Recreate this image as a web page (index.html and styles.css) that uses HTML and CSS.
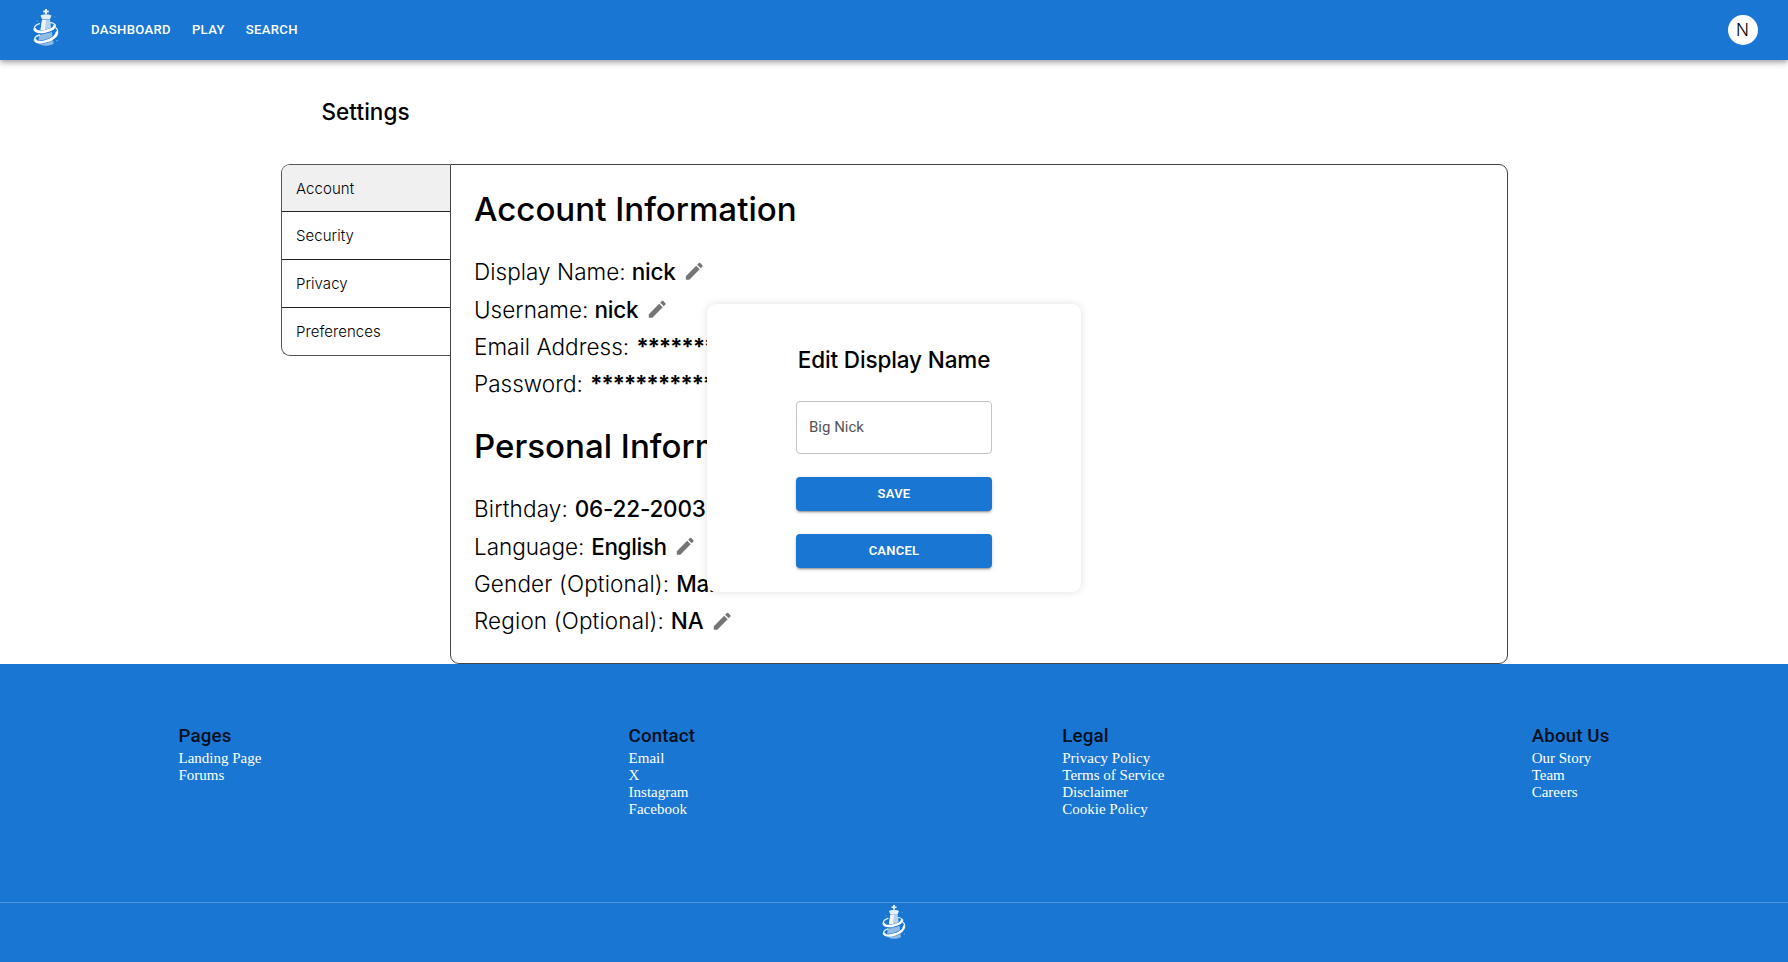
FILE: index.html
```html
<!DOCTYPE html>
<html lang="en">
<head>
<meta charset="utf-8">
<title>Settings</title>
<link rel="stylesheet" href="styles.css">
</head>
<body>
<svg class="defs" width="0" height="0">
  <symbol id="pencil" viewBox="0 0 24 24"><path d="M3 17.25V21h3.75L17.81 9.94l-3.75-3.75L3 17.25zM20.71 7.04c.39-.39.39-1.02 0-1.41l-2.34-2.34a.9959.9959 0 0 0-1.41 0l-1.83 1.83 3.75 3.75 1.83-1.83z"/></symbol>
  <symbol id="logo" viewBox="0 0 26 37">
    <path fill="#e8f1fa" d="M12 0h2v1.600h1.800v1.800H14V5h-2V3.400h-1.800V1.600H12z"/>
    <path fill="#e2eefa" d="M7.500 6.500q5.500-2.600 11 0L16.800 10.500H9.200z"/>
    <path fill="#b5d2ef" d="M9 11h8l2 14H7z"/>
    <path fill="#edf5fc" d="M9 11h4l-1.500 13H7z"/>
    <path fill="#8fbbe6" d="M6 26l13-3 1.500 11v1q-7.500 3.500-15 0v-2z"/>
    <path fill="none" stroke="#1976d2" stroke-width="3.800" d="M1.500 20.500C4 25.500 21 22.500 22.300 16.500M1 31C5 36.500 23 31 24.500 23"/>
    <path fill="none" stroke="#fff" stroke-width="2.700" stroke-linecap="round" d="M1.800 20.300C3.500 25.300 21 22 21.800 16.500M2 31C5 36.300 23 31 24 23.500"/>
    <path fill="none" stroke="#e2eefa" stroke-width="1.300" stroke-linecap="round" d="M1.500 20.500C.8 17.800 3 15.800 6.500 14.600M22 16.500C22 14.800 20.500 14 17.500 13.600M1.700 30.800C1.500 28.500 3.500 26.800 6.500 26M24.300 23.500C25 21.500 24.300 20 22.800 18.800"/>
    <path fill="#8fbbe6" d="M3.800 11.500h1v1h-1zM21.500 7.500h.8v.8h-.8zM23.500 31h1.200v1.200h-1.200z"/>
  </symbol>
</svg>

<header class="topbar">
  <svg class="topbar-logo"><use href="#logo"/></svg>
  <nav class="topnav"><a>DASHBOARD</a><a>PLAY</a><a>SEARCH</a></nav>
  <div class="avatar">N</div>
</header>

<main class="main">
  <h1 class="title">Settings</h1>
  <div class="settings">
    <ul class="tabs">
      <li class="tab active">Account</li>
      <li class="tab">Security</li>
      <li class="tab">Privacy</li>
      <li class="tab">Preferences</li>
    </ul>
    <section class="panel">
      <h2 class="heading">Account Information</h2>
      <div class="rows">
        <p class="row"><span>Display Name:</span><b>nick</b><svg class="edit"><use href="#pencil"/></svg></p>
        <p class="row"><span>Username:</span><b>nick</b><svg class="edit"><use href="#pencil"/></svg></p>
        <p class="row"><span>Email Address:</span><b class="masked">***********</b></p>
        <p class="row"><span>Password:</span><b class="masked">************</b></p>
      </div>
      <h2 class="heading">Personal Information</h2>
      <div class="rows personal">
        <p class="row"><span>Birthday:</span><b>06-22-2003</b></p>
        <p class="row language"><span>Language:</span><b>English</b><svg class="edit"><use href="#pencil"/></svg></p>
        <p class="row"><span>Gender (Optional):</span><b>Male</b></p>
        <p class="row"><span>Region (Optional):</span><b>NA</b><svg class="edit"><use href="#pencil"/></svg></p>
      </div>
    </section>
  </div>
</main>

<div class="modal">
  <h3 class="modal-title">Edit Display Name</h3>
  <div class="field">Big Nick</div>
  <button class="btn">SAVE</button>
  <button class="btn">CANCEL</button>
</div>

<footer class="footer">
  <div class="columns">
    <div class="col"><h4>Pages</h4><a>Landing Page</a><a>Forums</a></div>
    <div class="col"><h4>Contact</h4><a>Email</a><a>X</a><a>Instagram</a><a>Facebook</a></div>
    <div class="col"><h4>Legal</h4><a>Privacy Policy</a><a>Terms of Service</a><a>Disclaimer</a><a>Cookie Policy</a></div>
    <div class="col"><h4>About Us</h4><a>Our Story</a><a>Team</a><a>Careers</a></div>
  </div>
  <div class="bottom"><svg class="bottom-logo"><use href="#logo"/></svg></div>
</footer>
</body>
</html>
```

FILE: styles.css
```css
* { box-sizing: border-box; }
body { margin: 0; height: 962px; overflow: hidden; background: #fff; color: #000; font-family: Inter, sans-serif; display: flex; flex-direction: column; }
h1, h2, h3, h4, p, ul { margin: 0; padding: 0; }
.defs { position: absolute; }

.topbar { height: 60px; flex: none; background: #1976d2; display: flex; align-items: center; padding: 0 30.500px 0 33px; position: relative;
  box-shadow: 0 2px 4px -1px rgba(0,0,0,.2), 0 4px 5px rgba(0,0,0,.14), 0 1px 9px rgba(0,0,0,.12); }
.topbar-logo { width: 26px; height: 37px; margin-top: -5px; }
.topnav { display: flex; gap: 21px; margin-left: 32px; color: #fff; font: 500 13.1px/20px Roboto, sans-serif; letter-spacing: .33px; margin-top: -1px; }
.avatar { margin-left: auto; width: 30px; height: 30px; border-radius: 50%; background: #fff; font: 300 17px/31px Inter, sans-serif; text-align: center; }

.main { height: 604px; flex: none; padding: 0 280px 0 280.500px; }
.title { height: 104px; padding: 38px 0 0 41px; font-size: 22.500px; line-height: 28px; font-weight: 500; letter-spacing: .05px; }
.settings { display: flex; height: 500px; }
.tabs { list-style: none; width: 169.500px; height: 192px; border: 1px solid #555; border-right: 0; border-radius: 9px 0 0 9px; overflow: hidden; display: grid; grid-template-rows: 47px 48px 48px 47px; }
.tab { padding-left: 14.500px; display: flex; align-items: center; font-size: 15px; font-weight: 300; letter-spacing: .05px; border-bottom: 1px solid #222; }
.tab:last-child { border-bottom: 0; }
.active { background: #f0f0f0; }
.panel { width: 1057.500px; flex: none; border: 1px solid #444; border-radius: 0 9px 9px 9px; border-top-left-radius: 0; padding: 24px 23px 0; }
.heading { font-size: 33.100px; line-height: 40px; font-weight: 500; margin-bottom: 24px; white-space: nowrap; }
.rows + .heading { margin-top: 23.500px; }
.row { display: flex; align-items: center; height: 37.400px; font-size: 22.500px; font-weight: 300; white-space: nowrap; letter-spacing: .04px; }
.row b { font-weight: 500; margin-left: 6px; letter-spacing: -.2px; }
.row .masked { font-weight: 700; letter-spacing: -1.300px; margin-left: 7px; }
.personal .row { letter-spacing: .14px; }
.personal .row b { letter-spacing: -.2px; margin-left: 6.800px; }
.personal .language { letter-spacing: 0; }
.personal .language b { letter-spacing: -.35px; }
.edit { width: 22.500px; height: 22.500px; margin-left: 7.300px; fill: #757575; }

.modal { position: absolute; left: 707px; top: 304px; width: 374px; height: 288px; background: #fff; border-radius: 9px; padding: 42px 89px 0; display: flex; flex-direction: column;
  box-shadow: 0 0 9px rgba(0,0,0,.12); }
.modal-title { font-size: 22.500px; line-height: 28px; font-weight: 500; letter-spacing: -.13px; text-align: center; white-space: nowrap; margin: 0 -20px 27px; }
.field { height: 53px; border: 1px solid #c4c4c4; border-radius: 4px; padding-left: 12px; font: 400 15px/50px Roboto, sans-serif; color: #555; margin-bottom: 23px; }
.btn { height: 34px; border: 0; border-radius: 4px; background: #1976d2; color: #fff; font: 600 13px/20px Roboto, sans-serif; letter-spacing: .25px; padding: 0 0 1px; margin-bottom: 23px;
  box-shadow: 0 3px 1px -2px rgba(0,0,0,.2), 0 2px 2px rgba(0,0,0,.14), 0 1px 5px rgba(0,0,0,.12); }

.footer { flex: 1; background: #1976d2; }
.columns { display: flex; justify-content: space-between; height: 238px; padding: 60px 178.500px 0; }
.col { display: flex; flex-direction: column; color: #fff; font: 15px/16.875px "Liberation Serif", serif; white-space: nowrap; }
.col h4 { font: 500 18.750px/24px Roboto, sans-serif; color: #04101c; margin-bottom: 2px; letter-spacing: .12px; }
.bottom { border-top: 1px solid #4f97dd; display: flex; justify-content: center; padding-top: 2px; }
.bottom-logo { width: 24px; height: 34px; }
```
